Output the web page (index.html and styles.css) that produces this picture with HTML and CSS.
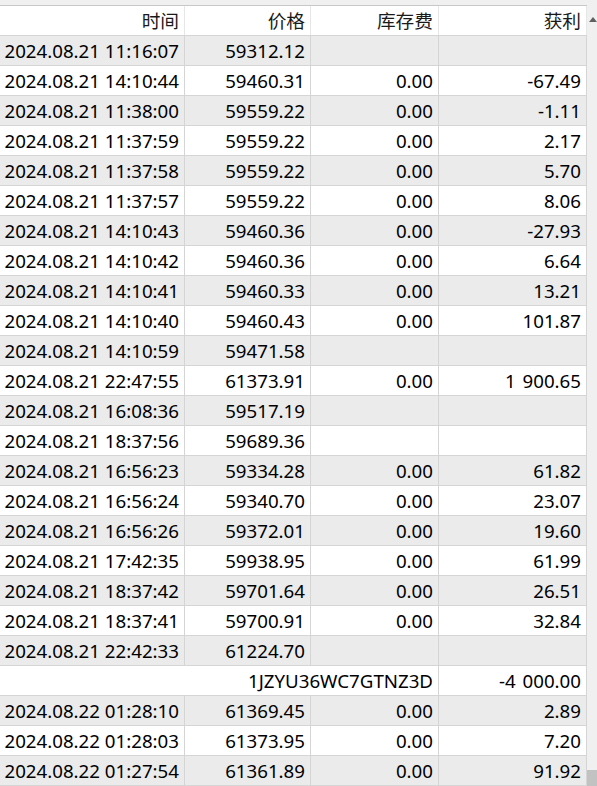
FILE: index.html
```html
<!DOCTYPE html>
<html lang="zh">
<head>
<meta charset="utf-8">
<title>Table</title>
<link rel="stylesheet" href="styles.css">
</head>
<body>
<div class="frame">
  <div class="main">
    <div class="strip"></div>
    <div class="row head">
      <div class="cell">时间</div>
      <div class="cell">价格</div>
      <div class="cell">库存费</div>
      <div class="cell">获利</div>
    </div>
    <div class="row odd"><div class="cell">2024.08.21 11:16:07</div><div class="cell">59312.12</div><div class="cell"></div><div class="cell"></div></div>
    <div class="row"><div class="cell">2024.08.21 14:10:44</div><div class="cell">59460.31</div><div class="cell">0.00</div><div class="cell">-67.49</div></div>
    <div class="row odd"><div class="cell">2024.08.21 11:38:00</div><div class="cell">59559.22</div><div class="cell">0.00</div><div class="cell">-1.11</div></div>
    <div class="row"><div class="cell">2024.08.21 11:37:59</div><div class="cell">59559.22</div><div class="cell">0.00</div><div class="cell">2.17</div></div>
    <div class="row odd"><div class="cell">2024.08.21 11:37:58</div><div class="cell">59559.22</div><div class="cell">0.00</div><div class="cell">5.70</div></div>
    <div class="row"><div class="cell">2024.08.21 11:37:57</div><div class="cell">59559.22</div><div class="cell">0.00</div><div class="cell">8.06</div></div>
    <div class="row odd"><div class="cell">2024.08.21 14:10:43</div><div class="cell">59460.36</div><div class="cell">0.00</div><div class="cell">-27.93</div></div>
    <div class="row"><div class="cell">2024.08.21 14:10:42</div><div class="cell">59460.36</div><div class="cell">0.00</div><div class="cell">6.64</div></div>
    <div class="row odd"><div class="cell">2024.08.21 14:10:41</div><div class="cell">59460.33</div><div class="cell">0.00</div><div class="cell">13.21</div></div>
    <div class="row"><div class="cell">2024.08.21 14:10:40</div><div class="cell">59460.43</div><div class="cell">0.00</div><div class="cell">101.87</div></div>
    <div class="row odd"><div class="cell">2024.08.21 14:10:59</div><div class="cell">59471.58</div><div class="cell"></div><div class="cell"></div></div>
    <div class="row"><div class="cell">2024.08.21 22:47:55</div><div class="cell">61373.91</div><div class="cell">0.00</div><div class="cell num">1 900.65</div></div>
    <div class="row odd"><div class="cell">2024.08.21 16:08:36</div><div class="cell">59517.19</div><div class="cell"></div><div class="cell"></div></div>
    <div class="row"><div class="cell">2024.08.21 18:37:56</div><div class="cell">59689.36</div><div class="cell"></div><div class="cell"></div></div>
    <div class="row odd"><div class="cell">2024.08.21 16:56:23</div><div class="cell">59334.28</div><div class="cell">0.00</div><div class="cell">61.82</div></div>
    <div class="row"><div class="cell">2024.08.21 16:56:24</div><div class="cell">59340.70</div><div class="cell">0.00</div><div class="cell">23.07</div></div>
    <div class="row odd"><div class="cell">2024.08.21 16:56:26</div><div class="cell">59372.01</div><div class="cell">0.00</div><div class="cell">19.60</div></div>
    <div class="row"><div class="cell">2024.08.21 17:42:35</div><div class="cell">59938.95</div><div class="cell">0.00</div><div class="cell">61.99</div></div>
    <div class="row odd"><div class="cell">2024.08.21 18:37:42</div><div class="cell">59701.64</div><div class="cell">0.00</div><div class="cell">26.51</div></div>
    <div class="row"><div class="cell">2024.08.21 18:37:41</div><div class="cell">59700.91</div><div class="cell">0.00</div><div class="cell">32.84</div></div>
    <div class="row odd"><div class="cell">2024.08.21 22:42:33</div><div class="cell">61224.70</div><div class="cell"></div><div class="cell"></div></div>
    <div class="row"><div class="cell span3">1JZYU36WC7GTNZ3D</div><div class="cell num">-4 000.00</div></div>
    <div class="row odd"><div class="cell">2024.08.22 01:28:10</div><div class="cell">61369.45</div><div class="cell">0.00</div><div class="cell">2.89</div></div>
    <div class="row"><div class="cell">2024.08.22 01:28:03</div><div class="cell">61373.95</div><div class="cell">0.00</div><div class="cell">7.20</div></div>
    <div class="row odd"><div class="cell">2024.08.22 01:27:54</div><div class="cell">61361.89</div><div class="cell">0.00</div><div class="cell">91.92</div></div>
  </div>
  <div class="scrollbar">
    <svg class="arrow" width="10" height="8" viewBox="0 0 10 8"><polygon points="2,7 6,2 10,7" fill="#606060"/></svg>
    <div class="track"></div>
    <div class="thumb"></div>
  </div>
</div>
</body>
</html>
```

FILE: styles.css
```css
html, body {
  margin: 0;
  padding: 0;
  background: #ffffff;
}
body {
  font-family: "Noto Sans", "Noto Sans CJK SC", sans-serif;
  font-size: 18.7px;
  color: #000000;
  overflow: hidden;
}
.frame {
  display: flex;
  width: 597px;
  height: 786px;
  overflow: hidden;
}
.main {
  width: 587px;
  flex: none;
}
.strip {
  height: 5px;
  background: #f0f0f0;
  border-bottom: 1px solid #c8c8c8;
}
.row {
  display: grid;
  grid-template-columns: 185px 126px 128px 148px;
  height: 30px;
  box-sizing: border-box;
  border-bottom: 1px solid #d5d5d5;
}
.row.odd {
  background: #ebebeb;
}
.cell {
  box-sizing: border-box;
  border-right: 1px solid #d5d5d5;
  padding-right: 5px;
  text-align: right;
  line-height: 29px;
  white-space: nowrap;
  overflow: hidden;
}
.num {
  word-spacing: 2px;
}
.span3 {
  grid-column: span 3;
}
.head {
  background: #ffffff;
}
.head .cell {
  border-right-color: #e6e6e6;
  color: #1a1a1a;
}
.scrollbar {
  width: 10px;
  flex: none;
  display: flex;
  flex-direction: column;
  background: #f0f0f0;
}
.arrow {
  display: block;
  margin-top: 15px;
}
.track {
  flex: 1;
}
.thumb {
  height: 16px;
  background: #c2c2c2;
}
```
